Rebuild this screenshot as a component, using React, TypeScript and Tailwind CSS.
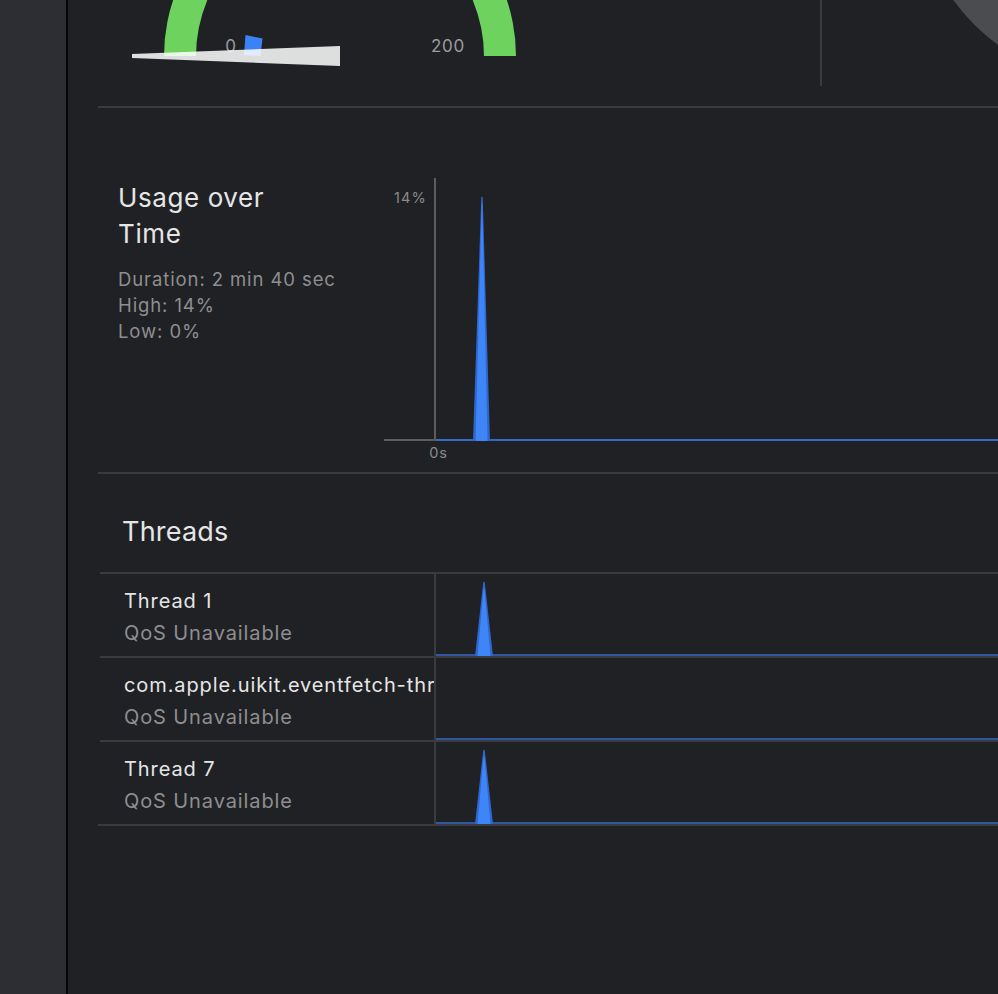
import React from "react";

const font = { fontFamily: "Inter, 'Noto Sans', sans-serif" };

function Spike() {
  return (
    <svg className="block flex-1 h-[82px]" viewBox="436 0 562 82" preserveAspectRatio="none">
      <line x1="436" y1="81" x2="998" y2="81" stroke="#3569c8" strokeWidth="1.6" />
      <polygon points="475,82 483.3,8 484.7,8 493,82" fill="#2f66cc" />
      <polygon points="477.5,82 483.6,14 484.4,14 490.5,82" fill="#3e85f7" />
    </svg>
  );
}

function EmptyGraph() {
  return (
    <svg className="block flex-1 h-[82px]" viewBox="436 0 562 82" preserveAspectRatio="none">
      <line x1="436" y1="81" x2="998" y2="81" stroke="#3569c8" strokeWidth="1.6" />
    </svg>
  );
}

function Row({ name, graph }: { name: string; graph: React.ReactNode }) {
  return (
    <div className="flex border-t-2 border-[#3a3b3e] ml-[2px] h-[84px]">
      <div className="w-[334px] shrink-0 overflow-hidden whitespace-nowrap pl-[24px] pt-[11px]">
        <div className="text-[20px] leading-[32px] tracking-[0.9px] text-[#e6e6e6]">{name}</div>
        <div className="text-[20px] leading-[32px] tracking-[0.9px] text-[#8e8e90]">QoS Unavailable</div>
      </div>
      <div className="w-[2px] shrink-0 bg-[#3a3b3e]" />
      {graph}
    </div>
  );
}

export default function App() {
  return (
    <div className="flex w-[998px] h-[994px] overflow-hidden bg-[#202124]" style={font}>
      <div className="w-[66px] shrink-0 bg-[#2d2e33]" />
      <div className="w-[2px] shrink-0 bg-[#050505]" />
      <div className="flex-1 flex flex-col pl-[30px]">
        {/* Gauge section */}
        <div className="flex h-[108px] border-b-2 border-[#3a3b3e] shrink-0">
          <svg className="block w-[722px] h-[106px] shrink-0" viewBox="98 0 722 106">
            <path d="M 164 56 A 176 176 0 0 1 516 56 L 484 56 A 144 144 0 0 0 196 56 Z" fill="#6dd25e" />
            <text x="231" y="52" fontSize="17" fill="#9b9b9d" textAnchor="middle" letterSpacing="0.8" fontFamily="Inter, sans-serif">0</text>
            <text x="448" y="52" fontSize="17" fill="#9b9b9d" textAnchor="middle" letterSpacing="0.8" fontFamily="Inter, sans-serif">200</text>
            <polygon points="245.5,35 262.5,38.5 260.5,56 244,55" fill="#3b82f6" />
            <polygon points="132,54 340,46 340,66 132,58" fill="#ffffff" fillOpacity="0.85" />
          </svg>
          <div className="w-[2px] h-[86px] shrink-0 bg-[#3a3b3e]" />
          <svg className="block flex-1 h-[106px]" viewBox="822 0 176 106" preserveAspectRatio="xMinYMin slice">
            <circle cx="1120" cy="-121" r="186" fill="none" stroke="#4b4c50" strokeWidth="40" />
          </svg>
        </div>

        {/* Usage over time */}
        <div className="flex h-[366px] border-b-2 border-[#3a3b3e] shrink-0">
          <div className="w-[286px] shrink-0 pl-[20px] pt-[72px]">
            <div className="text-[26px] leading-[36px] tracking-[0.6px] text-[#e6e6e6]">
              Usage over
              <br />
              Time
            </div>
            <div className="mt-[14px] text-[18.5px] leading-[26px] tracking-[0.9px] text-[#8e8e90] whitespace-nowrap">
              <div>Duration: 2 min 40 sec</div>
              <div>High: 14%</div>
              <div>Low: 0%</div>
            </div>
          </div>
          <svg className="block flex-1 h-[364px]" viewBox="384 108 614 364" preserveAspectRatio="none">
            <line x1="435" y1="178" x2="435" y2="441" stroke="#5c5d60" strokeWidth="2" />
            <line x1="384" y1="440" x2="436" y2="440" stroke="#5c5d60" strokeWidth="2" />
            <line x1="436" y1="440" x2="998" y2="440" stroke="#3569c8" strokeWidth="2" />
            <polygon points="473,441 481.3,197 482.7,197 490,441" fill="#2f66cc" />
            <polygon points="475.5,441 481.7,204 482.3,204 487.5,441" fill="#3e85f7" />
            <text x="427" y="203" fontSize="14.5" fill="#8a8a8c" textAnchor="end" letterSpacing="1.2" fontFamily="Inter, sans-serif">14%</text>
            <text x="438.5" y="458" fontSize="14.5" fill="#8a8a8c" textAnchor="middle" letterSpacing="0.8" fontFamily="Inter, sans-serif">0s</text>
          </svg>
        </div>

        {/* Threads */}
        <div className="h-[98px] shrink-0 pl-[24px] pt-[40px]">
          <div className="text-[27px] leading-[36px] tracking-[0.2px] text-[#e6e6e6]">Threads</div>
        </div>
        <Row name="Thread 1" graph={<Spike />} />
        <Row name="com.apple.uikit.eventfetch-thread" graph={<EmptyGraph />} />
        <Row name="Thread 7" graph={<Spike />} />
        <div className="h-[2px] bg-[#3a3b3e] shrink-0" />
      </div>
    </div>
  );
}
